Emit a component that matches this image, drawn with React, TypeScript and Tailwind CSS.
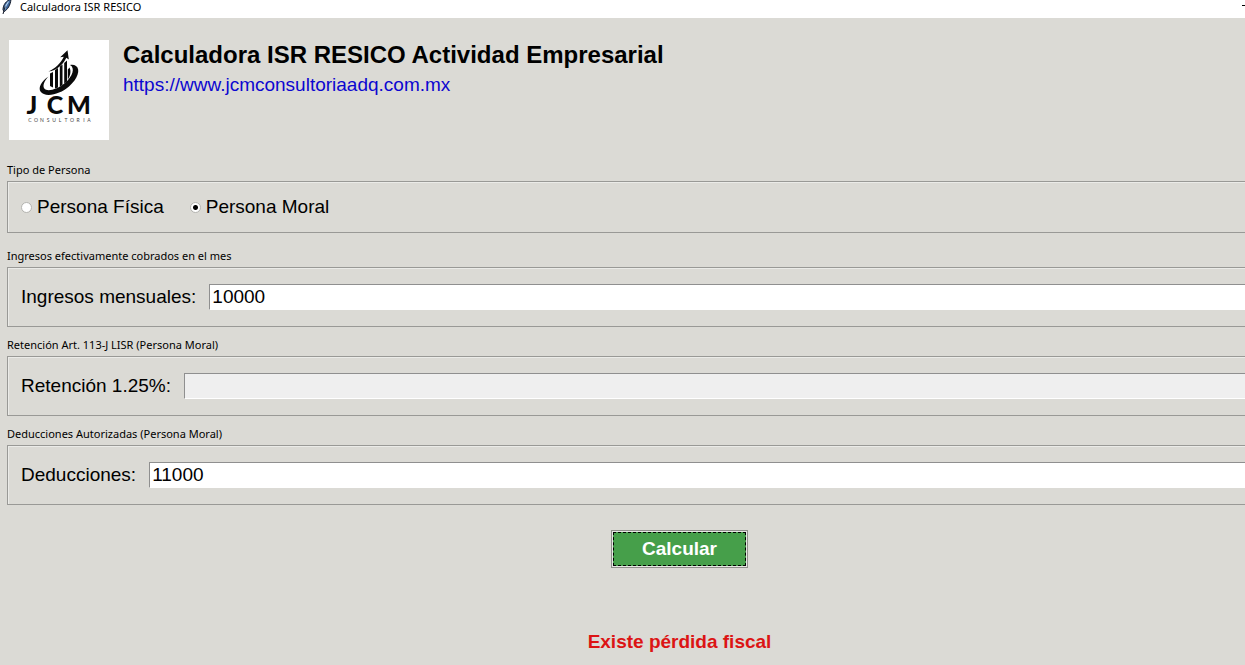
import React, { useState } from 'react';

const SANS = "font-['Liberation_Sans',Arial,sans-serif]";
const UI = "font-['Noto_Sans','Open_Sans',sans-serif]";

const FeatherIcon = () => (
    <svg viewBox="0 0 12 18" className="w-3 h-[18px] shrink-0" aria-hidden="true">
        <path d="M11 -1C6.600 0.500 3 4.500 3 10L4.200 11.500C7.500 9.500 10.500 5.500 11 -1Z" fill="#3f679c" stroke="#111827" strokeWidth="1" />
        <path d="M8.500 1.500C6.200 4.500 5 7.500 4.200 10.500" fill="none" stroke="#b8d4f0" strokeWidth="1.200" />
        <path d="M5.200 6.500L3 14" fill="none" stroke="#111827" strokeWidth="1" />
    </svg>
);

const Logo = () => (
    <svg viewBox="0 0 100 100" className="w-[100px] h-[100px] shrink-0 bg-white" role="img" aria-label="JCM Consultoria">
        {/* barras */}
        <g fill="#0a0a0a">
            <path d="M41 33.500L44 32V47.500L41 46Z" />
            <path d="M46 30L49 28V47.500L46 48.500Z" />
            <path d="M50.800 26.500L53.500 24.500V45L50.800 46.700Z" />
            <path d="M55.200 23L58 20.500V41.500L55.200 43.700Z" />
        </g>
        {/* flecha */}
        <path d="M39.500 31.500C46.500 28.500 51.500 23.500 54.800 16.800L51.200 17.200L58.500 10.200L59.800 19.500L57.300 17.800C53.500 25.500 47.500 30.500 39.500 31.500Z" fill="#0a0a0a" />
        {/* aro */}
        <path d="M39.500 36.500C32.500 41 29 47.500 31.500 51.500C36 58 51 54.500 60 46.500C68.500 39 72 29.500 67 26C65.500 24.900 63.500 24.600 61 25C66.500 28 63.500 36.500 56 43C48.500 49.500 38 52.200 35.300 48.500C33.300 45.500 35.500 40.500 39.500 36.500Z" fill="#0a0a0a" />
        <path d="M60.500 27.500C62.500 31 61 36.500 58.800 39.500V29.500Z" fill="#0a0a0a" />
        <g className="font-['Lato',sans-serif]" textAnchor="middle">
            <g fontSize="25" fontWeight="900" fill="#0a0a0a">
                <text x="23" y="74">J</text>
                <text x="46" y="74">C</text>
                <text x="70" y="74">M</text>
            </g>
            <text x="21 27 33 39 45 51 57 63 69 75 80" y="82" fontSize="5" fill="#444">CONSULTORIA</text>
        </g>
    </svg>
);

interface GroupProps {
    title: string;
    children: React.ReactNode;
}

const Group = ({ title, children }: GroupProps) => (
    <fieldset className="min-w-0">
        <legend className={`${UI} text-[11px] leading-4 mb-[3px]`}>{title}</legend>
        <div className="flex items-center border border-r-0 border-[#999996] shadow-[inset_1px_1px_0_#ebebe8] py-4 pl-[13px]">
            {children}
        </div>
    </fieldset>
);

interface FieldProps {
    id: string;
    label: string;
    value: string;
    disabled?: boolean;
    onChange?: (value: string) => void;
}

const Field = ({ id, label, value, disabled, onChange }: FieldProps) => (
    <>
        <label htmlFor={id} className="text-[19px] leading-[26px] mr-[13px] whitespace-nowrap">{label}</label>
        <input
            id={id}
            type="text"
            value={value}
            disabled={disabled}
            onChange={(e) => onChange?.(e.target.value)}
            className="flex-1 min-w-0 h-[26px] pl-0.5 text-[19px] bg-white border-t border-l border-b border-t-[#8f8f8f] border-l-[#8f8f8f] border-b-white outline-none disabled:bg-[#efefef]"
        />
    </>
);

interface OptionProps {
    label: string;
    checked: boolean;
    onSelect: () => void;
}

const Option = ({ label, checked, onSelect }: OptionProps) => (
    <label className="flex items-center gap-[5px] text-[19px] leading-[18px]">
        <input
            type="radio"
            name="persona"
            checked={checked}
            onChange={onSelect}
            className="appearance-none w-[11px] h-[11px] rounded-full bg-white border border-[#b4b4b0] checked:bg-[radial-gradient(circle,#000_0_2px,#fff_3px)]"
        />
        {label}
    </label>
);

export default function App() {
    const [persona, setPersona] = useState('moral');
    const [ingresos, setIngresos] = useState('10000');
    const [deducciones, setDeducciones] = useState('11000');

    return (
        <div className={`min-h-screen bg-[#dbdad5] text-black overflow-hidden ${SANS}`}>
            {/* barra de título */}
            <div className={`flex items-start justify-between h-[18px] bg-white ${UI}`}>
                <div className="flex items-start gap-2">
                    <FeatherIcon />
                    <span className="text-[11px] leading-[14px]">Calculadora ISR RESICO</span>
                </div>
                <button type="button" aria-label="Minimizar" className="w-[3px] h-px bg-black mt-[5px]" />
            </div>

            <header className="flex gap-[14px] pt-[22px] pl-[9px]">
                <Logo />
                <div>
                    <h1 className="text-[24px] leading-[30px] font-bold">Calculadora ISR RESICO Actividad Empresarial</h1>
                    <a href="https://www.jcmconsultoriaadq.com.mx" className="block text-[19px] leading-[30px] text-[#0c06d0]">
                        https://www.jcmconsultoriaadq.com.mx
                    </a>
                </div>
            </header>

            <form className="pl-[7px] pt-[22px]" onSubmit={(e) => e.preventDefault()}>
                <Group title="Tipo de Persona">
                    <div className="flex gap-[26px]">
                        <Option label="Persona Física" checked={persona === 'fisica'} onSelect={() => setPersona('fisica')} />
                        <Option label="Persona Moral" checked={persona === 'moral'} onSelect={() => setPersona('moral')} />
                    </div>
                </Group>

                <div className="flex flex-col gap-[10px] mt-[15px]">
                    <Group title="Ingresos efectivamente cobrados en el mes">
                        <Field id="ingresos" label="Ingresos mensuales:" value={ingresos} onChange={setIngresos} />
                    </Group>
                    <Group title="Retención Art. 113-J LISR (Persona Moral)">
                        <Field id="retencion" label="Retención 1.25%:" value="" disabled />
                    </Group>
                    <Group title="Deducciones Autorizadas (Persona Moral)">
                        <Field id="deducciones" label="Deducciones:" value={deducciones} onChange={setDeducciones} />
                    </Group>
                </div>

                <div className="flex flex-col items-center pl-[107px] pt-[25px]">
                    <button type="submit" className="border border-[#8e8e8a] p-px bg-[#e6e6e2]">
                        <span className="block border border-dashed border-black bg-[#469f4a] px-7 py-1 text-[19px] leading-6 font-bold text-white">
                            Calcular
                        </span>
                    </button>
                    <output className="mt-[62px] text-[19px] leading-6 font-bold text-[#dc1414]">Existe pérdida fiscal</output>
                </div>
            </form>
        </div>
    );
}
